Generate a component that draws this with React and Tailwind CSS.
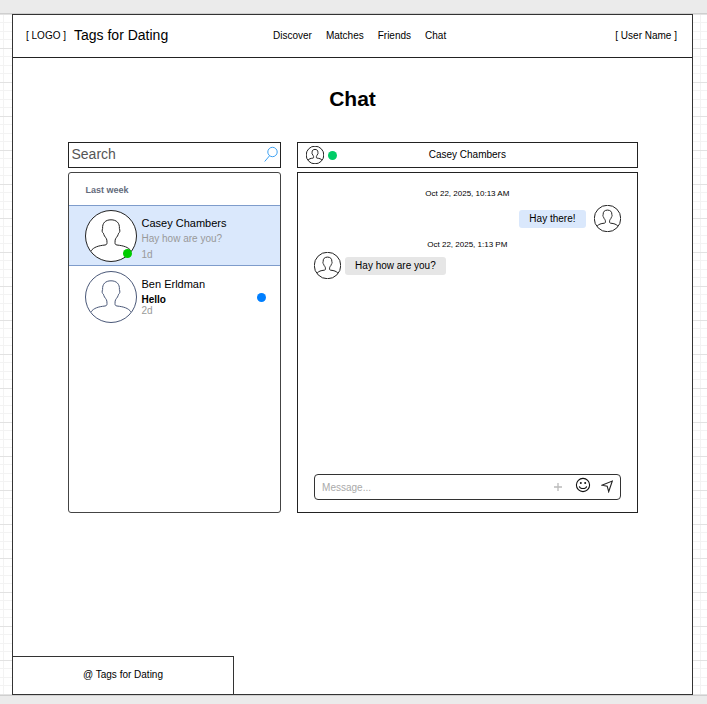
import React from "react";

function Avatar({ className }) {
  return (
    <svg viewBox="0 0 52 52" className={className} fill="none" stroke="currentColor" aria-hidden="true">
      <circle cx="26" cy="26" r="25.5" fill="white" vectorEffect="non-scaling-stroke" />
      <path
        vectorEffect="non-scaling-stroke"
        d="M5.8 41 C9 37 13 35.8 20 35 C21.8 34.7 22 34 22 32.5 C22 28.5 21.2 28.5 19.5 26 C18.8 25 18.8 24 18.4 23.2 C17 22.5 16.8 20.5 17.6 18.5 C17.2 13 20.5 9.8 26 9.8 C31.5 9.8 34.8 13 34.4 18.5 C35.2 20.5 35 22.5 33.6 23.2 C33.2 24 33.2 25 32.5 26 C30.8 28.5 30 28.5 30 32.5 C30 34 30.2 34.7 32 35 C39 35.8 43 37 46.2 41"
      />
    </svg>
  );
}

function Header() {
  return (
    <header className="flex h-[43px] items-center border-b border-[#222] px-[13px] pb-0.5 text-[10px]">
      <div className="flex w-[247px] items-center gap-2">
        <span>[ LOGO ]</span>
        <span className="text-[14px]">Tags for Dating</span>
      </div>
      <nav className="flex gap-[14px]">
        <a href="#discover">Discover</a>
        <a href="#matches">Matches</a>
        <a href="#friends">Friends</a>
        <a href="#chat">Chat</a>
      </nav>
      <a href="#account" className="mr-0.5 ml-auto">[ User Name ]</a>
    </header>
  );
}

function Sidebar() {
  return (
    <aside className="flex min-w-0 flex-col gap-1">
      <form role="search" className="flex h-[26px] items-center border border-[#222] pr-0.5 pb-0.5 pl-[3px]">
        <input
          type="search"
          aria-label="Search"
          placeholder="Search"
          className="min-w-0 flex-1 text-[14px] leading-5 outline-none placeholder:text-[#555]"
        />
        <svg viewBox="0 0 14 16" className="h-4 w-3.5" fill="none" stroke="#3da1f2" aria-hidden="true">
          <circle cx="8.5" cy="6" r="4.7" />
          <path d="M5.5 9.8 L0.7 15.5" />
        </svg>
      </form>
      <section className="flex-1 rounded-[3px] border border-[#444]">
        <h2 className="h-8 pt-0.5 pl-[17px] text-[9px] leading-[30px] font-bold text-[#646b7c]">Last week</h2>
        <button type="button" className="flex h-[61px] w-full items-start border-y border-[#7e9ccb] bg-[#dae8fc] pt-1 pl-4 text-left">
          <span className="relative">
            <Avatar className="size-[52px] text-[#222]" />
            <span className="absolute right-[5px] bottom-1 size-[9px] rounded-full bg-[#00cc00]" />
          </span>
          <span className="flex flex-col pt-[5px] pl-[5px] text-[10px] leading-4 text-[#999]">
            <span className="text-[11px] text-black">Casey Chambers</span>
            <span>Hay how are you?</span>
            <span>1d</span>
          </span>
        </button>
        <button type="button" className="flex h-[61px] w-full items-start pt-[5px] pr-[14px] pl-4 text-left">
          <Avatar className="size-[52px] text-[#4a5878]" />
          <span className="flex flex-1 flex-col pt-[5px] pl-[5px] text-[10px] leading-[11px] text-[#999]">
            <span className="text-[11px] leading-4 text-black">Ben Erldman</span>
            <span className="mt-0.5 font-bold text-black">Hello</span>
            <span>2d</span>
          </span>
          <span className="mt-[22px] size-[9px] rounded-full bg-[#007fff]" />
        </button>
      </section>
    </aside>
  );
}

function Composer() {
  return (
    <form className="mt-auto flex h-[26px] items-center rounded-[4px] border border-[#333] px-[7px]">
      <input
        type="text"
        aria-label="Message"
        placeholder="Message..."
        className="min-w-0 flex-1 text-[10px] outline-none placeholder:text-[#aaa]"
      />
      <button type="button" aria-label="Add attachment" className="mr-3">
        <svg viewBox="0 0 10 10" className="size-2.5" stroke="#bbb" strokeWidth="1.3">
          <path d="M5 1 V9 M1 5 H9" />
        </svg>
      </button>
      <button type="button" aria-label="Add emoji" className="mr-2.5 pb-1">
        <svg viewBox="0 0 16 16" className="size-4" fill="none" stroke="#111" strokeWidth="1.1">
          <circle cx="8" cy="8" r="6.6" />
          <path d="M4.3 9.3 C5.3 12.3 10.7 12.3 11.7 9.3" />
          <circle cx="5.8" cy="6" r="1" fill="#111" stroke="none" />
          <circle cx="10.2" cy="6" r="1" fill="#111" stroke="none" />
        </svg>
      </button>
      <button type="submit" aria-label="Send" className="pb-0.5">
        <svg viewBox="0 0 12 14" className="h-3.5 w-3" fill="none" stroke="#222" strokeWidth="1.1">
          <path d="M0.8 6.2 L11.3 2 L7.7 12.7 L6.2 7.2 Z" />
        </svg>
      </button>
    </form>
  );
}

function Conversation() {
  return (
    <section className="flex min-w-0 flex-col gap-1">
      <div className="grid h-[26px] grid-cols-[1fr_auto_1fr] items-center border border-[#222] px-2">
        <div className="flex items-center gap-1">
          <Avatar className="size-[18px] text-[#222]" />
          <span className="size-[9px] rounded-full bg-[#00cc66]" />
        </div>
        <h2 className="pb-0.5 text-[10px]">Casey Chambers</h2>
      </div>
      <div className="flex h-[341px] flex-col border border-[#222] px-4 pt-[15px] pb-3 text-[10px]">
        <time className="text-center text-[8px] leading-[11px]">Oct 22, 2025, 10:13 AM</time>
        <div className="mt-1.5 flex items-center justify-end gap-2">
          <p className="rounded-[3px] bg-[#dae8fc] px-2.5 leading-[18px]">Hay there!</p>
          <Avatar className="size-[27px] text-[#222]" />
        </div>
        <time className="mt-[7px] text-center text-[8px] leading-[11px]">Oct 22, 2025, 1:13 PM</time>
        <div className="mt-0.5 flex items-center gap-1">
          <Avatar className="size-[27px] text-[#222]" />
          <p className="rounded-[3px] bg-[#e6e6e6] px-2.5 leading-[18px]">Hay how are you?</p>
        </div>
        <Composer />
      </div>
    </section>
  );
}

export default function App() {
  return (
    <div className="flex min-h-screen flex-col bg-white font-['Liberation_Sans',Arial,sans-serif] text-black">
      <div className="h-[14px] border-b border-[#cfcfcf] bg-[#ebebeb]" />
      <div className="flex flex-1 flex-col bg-[linear-gradient(#e2e2e2_1px,transparent_1px_8px,#f3f3f3_8px_9px,transparent_9px_17px,#f3f3f3_17px_18px,transparent_18px_25px,#f3f3f3_25px_26px,transparent_26px),linear-gradient(90deg,#f3f3f3_1px,transparent_1px)] bg-[size:34px_34px,17px_17px] bg-[position:0_0,3px_0] pr-3.5 pl-3">
        <div className="flex flex-1 flex-col border border-[#333] bg-white">
          <Header />
          <main className="flex-1 px-5 pb-10">
            <h1 className="pt-[29px] text-center text-[21px] leading-6 font-bold">Chat</h1>
            <div className="mx-auto mt-[31px] grid max-w-[570px] grid-cols-[214fr_341fr] gap-4">
              <Sidebar />
              <Conversation />
            </div>
          </main>
          <footer className="h-[38px] w-[221px] border-t border-r border-[#333] text-center text-[10px] leading-9">
            @ Tags for Dating
          </footer>
        </div>
      </div>
      <div className="h-[9px] border-t border-[#cfcfcf] bg-[#ebebeb]" />
    </div>
  );
}
